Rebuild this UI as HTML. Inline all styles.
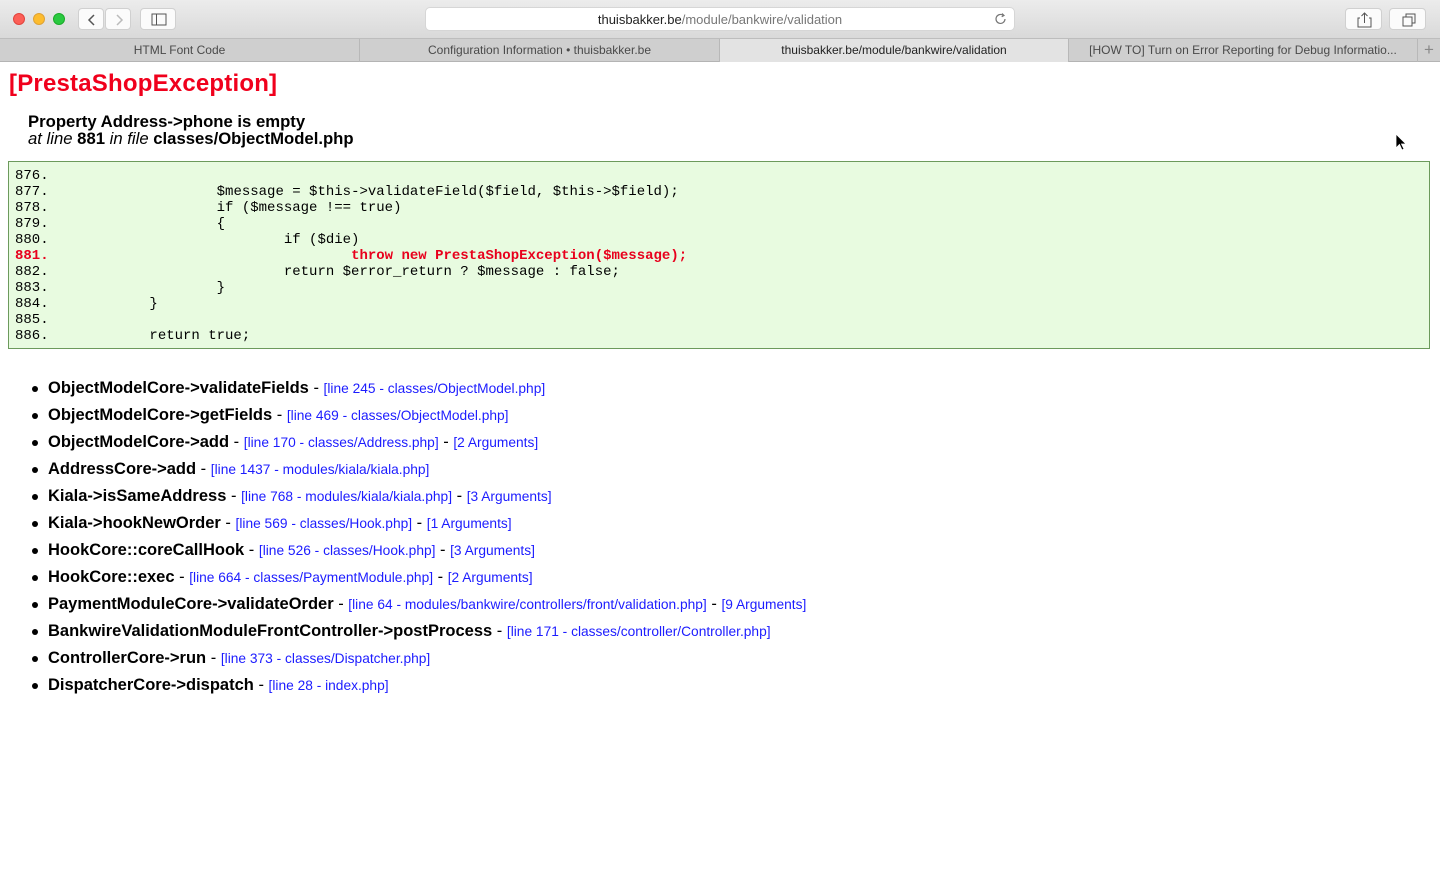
<!DOCTYPE html>
<html><head><meta charset="utf-8"><style>
*{margin:0;padding:0;box-sizing:border-box}
body{width:1440px;height:873px;overflow:hidden;background:#fff;font-family:"Liberation Sans",sans-serif;position:relative}
.toolbar{position:absolute;left:0;top:0;width:1440px;height:39px;background:linear-gradient(#ececec,#d9d9d9);border-bottom:1px solid #bdbdbd}
.dot{position:absolute;top:13px;width:12px;height:12px;border-radius:50%}
.btn{position:absolute;top:8px;height:22px;background:#fbfbfb;border-radius:4px;border:1px solid #d0d0d0}
.url{position:absolute;left:425px;top:7px;width:590px;height:24px;background:#fff;border-radius:5px;border:1px solid #d6d6d6;text-align:center;font-size:13px;line-height:23px;color:#222}
.tabs{position:absolute;left:0;top:39px;width:1440px;height:23px;background:#cfcfcf;border-bottom:1px solid #b4b4b4}
.tab{position:absolute;top:0;height:23px;font-size:12px;line-height:22px;text-align:center;color:#4a4a4a;border-right:1px solid #b8b8b8}
h1{position:absolute;left:9px;top:70px;font-size:24px;color:#f0001c;font-weight:bold;letter-spacing:0.2px}
.msg{position:absolute;left:28px;top:113px;font-size:16.7px;line-height:17px;color:#000}
.code{position:absolute;left:8px;top:161px;width:1422px;height:188px;background:#e8fbe0;border:1px solid #6c9a5c;padding:6px 6px}
pre{font-family:"Liberation Mono",monospace;font-size:14px;line-height:16px;tab-size:8;-moz-tab-size:8;color:#000}
.r{color:#e8001c;font-weight:bold}
ul{position:absolute;left:48px;top:375px;list-style:none;font-size:16.5px}
li{height:27px;line-height:27px;position:relative;white-space:nowrap}
li:before{content:"";position:absolute;left:-16px;top:11px;width:6px;height:6px;border-radius:50%;background:#000}
li b{font-size:16.5px}
li a{color:#1c1cff;font-size:13.75px;text-decoration:none}
</style></head><body>
<div class="toolbar">
<div class="dot" style="left:13px;background:#fc5f57;border:1px solid #e0443e"></div>
<div class="dot" style="left:33px;background:#fdbc2e;border:1px solid #dea236"></div>
<div class="dot" style="left:53px;background:#2ac940;border:1px solid #1aab29"></div>
<div class="btn" style="left:78px;width:26px"><svg width="26" height="22"><path d="M15 6l-5 5 5 5" stroke="#555" stroke-width="1.5" fill="none"/></svg></div>
<div class="btn" style="left:105px;width:26px"><svg width="26" height="22"><path d="M11 6l5 5-5 5" stroke="#bbb" stroke-width="1.5" fill="none"/></svg></div>
<div class="btn" style="left:140px;width:36px"><svg width="36" height="22"><rect x="11" y="5" width="14" height="11" fill="none" stroke="#555"/><line x1="15.5" y1="5" x2="15.5" y2="16" stroke="#555"/></svg></div>
<div class="url">thuisbakker.be<span style="color:#777">/module/bankwire/validation</span>
<svg style="position:absolute;right:6px;top:4px" width="14" height="14"><path d="M11 7a4.5 4.5 0 1 1-2-3.8" stroke="#777" stroke-width="1.2" fill="none"/><path d="M8 1.5l2 2-2.3 1.2" stroke="#777" stroke-width="1.2" fill="none"/></svg></div>
<div class="btn" style="left:1345px;width:37px"><svg width="37" height="22"><path d="M14 9h-2v9h13v-9h-2M18.5 4v10M15.5 7l3-3 3 3" stroke="#555" fill="none"/></svg></div>
<div class="btn" style="left:1389px;width:37px"><svg width="37" height="22"><rect x="13" y="8" width="9" height="9" fill="none" stroke="#555"/><path d="M16 8V5h9v9h-3" stroke="#555" fill="none"/></svg></div>
</div>
<div class="tabs">
<div class="tab" style="left:0;width:360px">HTML Font Code</div>
<div class="tab" style="left:360px;width:360px">Configuration Information • thuisbakker.be</div>
<div class="tab" style="left:720px;width:349px;background:#e3e3e3;color:#222">thuisbakker.be/module/bankwire/validation</div>
<div class="tab" style="left:1069px;width:349px">[HOW TO] Turn on Error Reporting for Debug Informatio...</div>
<div class="tab" style="left:1418px;width:22px;border:none;font-size:17px;color:#888">+</div>
</div>
<h1>[PrestaShopException]</h1>
<div class="msg"><b>Property Address-&gt;phone is empty</b><br><i>at line </i><b>881</b><i> in file </i><b>classes/ObjectModel.php</b></div>
<svg style="position:absolute;left:1395px;top:133px" width="12" height="18"><path d="M1 1v14l3.5-3.5 2.5 5.5 2-1-2.5-5H11z" fill="#000" stroke="#fff" stroke-width="0.8"/></svg>
<div class="code"><pre>876. 
877. 			$message = $this-&gt;validateField($field, $this-&gt;$field);
878. 			if ($message !== true)
879. 			{
880. 				if ($die)
<span class="r">881. 					throw new PrestaShopException($message);</span>
882. 				return $error_return ? $message : false;
883. 			}
884. 		}
885. 
886. 		return true;</pre></div>
<ul>
<li><b>ObjectModelCore-&gt;validateFields</b> - <a>[line 245 - classes/ObjectModel.php]</a></li>
<li><b>ObjectModelCore-&gt;getFields</b> - <a>[line 469 - classes/ObjectModel.php]</a></li>
<li><b>ObjectModelCore-&gt;add</b> - <a>[line 170 - classes/Address.php]</a> - <a>[2 Arguments]</a></li>
<li><b>AddressCore-&gt;add</b> - <a>[line 1437 - modules/kiala/kiala.php]</a></li>
<li><b>Kiala-&gt;isSameAddress</b> - <a>[line 768 - modules/kiala/kiala.php]</a> - <a>[3 Arguments]</a></li>
<li><b>Kiala-&gt;hookNewOrder</b> - <a>[line 569 - classes/Hook.php]</a> - <a>[1 Arguments]</a></li>
<li><b>HookCore::coreCallHook</b> - <a>[line 526 - classes/Hook.php]</a> - <a>[3 Arguments]</a></li>
<li><b>HookCore::exec</b> - <a>[line 664 - classes/PaymentModule.php]</a> - <a>[2 Arguments]</a></li>
<li><b>PaymentModuleCore-&gt;validateOrder</b> - <a>[line 64 - modules/bankwire/controllers/front/validation.php]</a> - <a>[9 Arguments]</a></li>
<li><b>BankwireValidationModuleFrontController-&gt;postProcess</b> - <a>[line 171 - classes/controller/Controller.php]</a></li>
<li><b>ControllerCore-&gt;run</b> - <a>[line 373 - classes/Dispatcher.php]</a></li>
<li><b>DispatcherCore-&gt;dispatch</b> - <a>[line 28 - index.php]</a></li>
</ul>
</body></html>
